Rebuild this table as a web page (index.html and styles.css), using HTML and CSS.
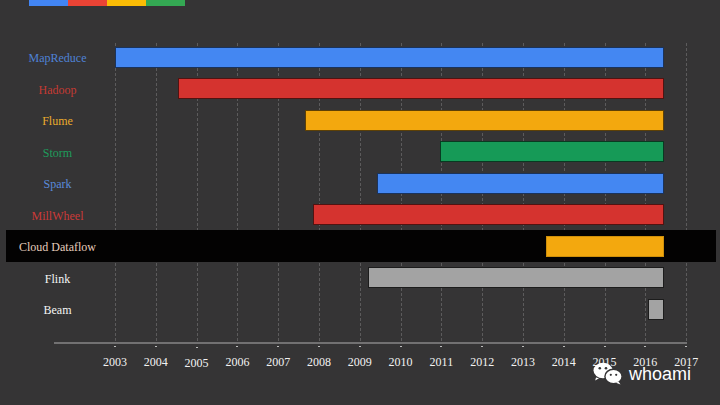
FILE: index.html
```html
<!DOCTYPE html>
<html>
<head>
<meta charset="utf-8">
<link rel="stylesheet" href="styles.css">
</head>
<body>
<div class="page">
  <div class="legend">
    <span class="seg blue"></span><span class="seg red"></span><span class="seg yellow"></span><span class="seg green"></span>
  </div>
  <div class="plot">
    <div class="row"><div class="label c-blue">MapReduce</div><div class="track"><div class="bar blue" style="margin-left:6px;width:549px"></div></div></div>
    <div class="row"><div class="label c-red">Hadoop</div><div class="track"><div class="bar red" style="margin-left:69px;width:486px"></div></div></div>
    <div class="row"><div class="label c-yellow">Flume</div><div class="track"><div class="bar yellow" style="margin-left:196px;width:359px"></div></div></div>
    <div class="row"><div class="label c-green">Storm</div><div class="track"><div class="bar green" style="margin-left:331px;width:224px"></div></div></div>
    <div class="row"><div class="label c-blue2">Spark</div><div class="track"><div class="bar blue" style="margin-left:268px;width:287px"></div></div></div>
    <div class="row"><div class="label c-red2">MillWheel</div><div class="track"><div class="bar red" style="margin-left:204px;width:351px"></div></div></div>
    <div class="row highlight"><div class="label c-cloud">Cloud Dataflow</div><div class="track"><div class="bar yellow flat" style="margin-left:437px;width:118px"></div></div></div>
    <div class="row"><div class="label c-white">Flink</div><div class="track"><div class="bar gray" style="margin-left:259px;width:296px"></div></div></div>
    <div class="row"><div class="label c-white">Beam</div><div class="track"><div class="bar gray" style="margin-left:539px;width:16px"></div></div></div>
  </div>
  <div class="axis"></div>
  <div class="years">
    <div class="yr">2003</div><div class="yr">2004</div><div class="yr low">2005</div><div class="yr">2006</div><div class="yr">2007</div><div class="yr">2008</div><div class="yr">2009</div><div class="yr">2010</div><div class="yr">2011</div><div class="yr">2012</div><div class="yr">2013</div><div class="yr">2014</div><div class="yr">2015</div><div class="yr">2016</div><div class="yr">2017</div>
  </div>
  <div class="watermark">
    <svg class="wx" width="30" height="23" viewBox="0 0 30 23">
      <path d="M3 15.5 L2.2 18.5 L6 16.2 Z" fill="#fff"/>
      <ellipse cx="10" cy="8.5" rx="9.5" ry="7.8" fill="#fff"/>
      <circle cx="6.8" cy="6.2" r="1.3" fill="#353435"/>
      <circle cx="13" cy="6.2" r="1.3" fill="#353435"/>
      <ellipse cx="20.5" cy="14.5" rx="8.6" ry="7.2" fill="#fff" stroke="#353435" stroke-width="1.4"/>
      <path d="M25.5 19.5 L27.5 22.5 L23 20.8 Z" fill="#fff"/>
      <circle cx="17.8" cy="12.8" r="1.1" fill="#353435"/>
      <circle cx="23.2" cy="12.8" r="1.1" fill="#353435"/>
    </svg>
    <span class="wm-text">whoami</span>
  </div>
</div>
</body>
</html>
```
FILE: styles.css
```css
* { box-sizing: border-box; }
html, body { margin: 0; padding: 0; }
body {
  background: #353435;
  width: 720px;
  height: 405px;
  overflow: hidden;
  font-family: "Liberation Serif", "Times New Roman", serif;
}
.page {
  position: relative;
  width: 720px;
  height: 405px;
}
.legend {
  display: flex;
  margin-left: 29px;
  height: 6px;
}
.seg { width: 39px; height: 6px; display: block; }
.seg.blue { background: #4285f4; }
.seg.red { background: #ea4335; }
.seg.yellow { background: #fbbc05; }
.seg.green { background: #34a853; }

.plot {
  margin-top: 35.25px;
  padding-bottom: 17px;
  background-image:
    repeating-linear-gradient(to bottom, #353435 0 2px, transparent 2px 5px),
    repeating-linear-gradient(to right, #5c5b5c 0 1px, transparent 1px 40.8px);
  background-repeat: no-repeat, no-repeat;
  background-size: 100% 100%, 573px 100%;
  background-position: 0 0, 115px 0;
}
.row {
  display: flex;
  align-items: center;
  height: 31.5px;
  margin-left: 6px;
  width: 710px;
}
.row.highlight { background: #030202; }
.label {
  width: 103px;
  text-align: center;
  font-size: 12px;
  line-height: 14px;
  padding-top: 2px;
}
.track {
  flex: 1;
  display: flex;
  align-items: center;
}
.bar {
  height: 21px;
  border: 1px solid rgba(0, 0, 0, 0.62);
}
.bar.flat { border-color: rgba(0,0,0,0.15); }
.bar.blue { background: #4487f2; }
.bar.red { background: #d5332f; }
.bar.yellow { background: #f3a80e; }
.bar.green { background: #169a57; }
.bar.gray { background: #a3a3a3; border-color: #1c1c1c; }

.c-blue { color: #4f82d6; }
.c-blue2 { color: #5a8ada; }
.c-red { color: #c53a33; }
.c-red2 { color: #cb3a38; }
.c-yellow { color: #eaab2c; }
.c-green { color: #1e9c5c; }
.c-cloud { color: #e6cdbd; }
.c-white { color: #f4f4f4; }

.axis {
  margin-left: 54px;
  width: 633px;
  height: 2px;
  background: #727172;
}
.years {
  display: flex;
  margin-left: 94.6px;
}
.yr {
  width: 40.8px;
  display: flex;
  flex-direction: column;
  align-items: center;
  font-size: 12px;
  line-height: 10px;
  color: #f2f2f2;
}
.yr::before {
  content: "";
  display: block;
  width: 2px;
  height: 1px;
  background: #bdbdbd;
  margin-top: 2px;
  margin-bottom: 10px;
}
.yr.low { padding-top: 1px; }

.watermark {
  position: absolute;
  left: 593px;
  top: 362px;
  display: flex;
  align-items: center;
  gap: 6px;
}
.wx { display: block; }
.wm-text {
  font-family: "Liberation Sans", Arial, sans-serif;
  font-size: 18px;
  line-height: 14px;
  color: #ffffff;
}
```
